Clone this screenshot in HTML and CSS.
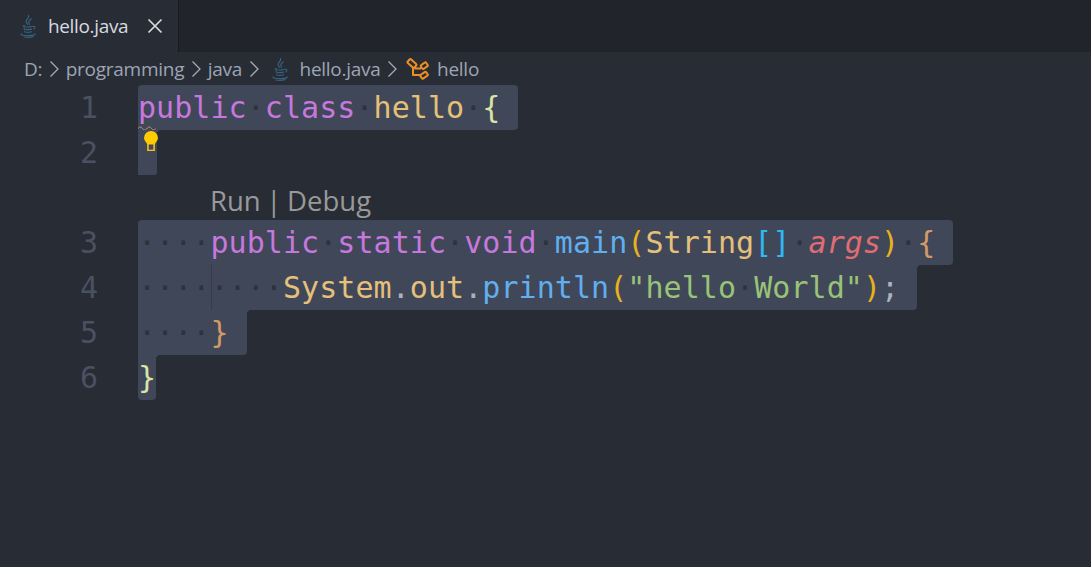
FILE: index.html
```html
<!DOCTYPE html>
<html lang="en">
<head>
<meta charset="utf-8">
<title>hello.java</title>
<link rel="stylesheet" href="styles.css">
</head>
<body>
<svg class="defs" width="0" height="0" aria-hidden="true">
  <symbol id="java" viewBox="0 0 24 24">
    <g fill="none" stroke="#36607f" stroke-width="1.200" stroke-linecap="round">
      <path d="M12.500 1.500c1.500 2.500-3.200 3.800-2.400 6.300.3 1 1.200 1.700 1.400 2.500"/>
      <path d="M15.200 5c-2 1.300-2.900 2-2.400 3.500.2.700.7 1.100.6 1.900"/>
      <path d="M8.300 11.500c-1.500.5-1.800 1 .5 1.300 2.200.3 5 .2 7-.3"/>
      <path d="M8.300 14.500c-.9.6.3 1 2.800 1.100 1.700 0 3.300-.1 4.400-.5"/>
      <path d="M9 17.300c-1 .6.6 1 3 1 1.500 0 2.700-.2 3.500-.6"/>
      <path d="M16.500 12.500c2.300-.8 3.300.8 1.500 2.300"/>
      <path d="M5.500 20c-1.800 1 3 1.700 7 1.700s7.500-.7 6.500-1.900"/>
      <path d="M8 23c3 .5 7 .3 9-.5"/>
    </g>
  </symbol>
  <symbol id="chev" viewBox="0 0 10 18">
    <path d="M1.500 1.500l7.500 7.500-7.500 7.500" fill="none" stroke="#a5abb5" stroke-width="1.300"/>
  </symbol>
</svg>

<div class="tabbar">
  <div class="tab">
    <svg class="ic-java"><use href="#java"/></svg>
    <span class="tab-name">hello.java</span>
    <svg class="ic-close" viewBox="0 0 16 16"><path d="M1.500 1.500l13 13M14.500 1.500l-13 13" fill="none" stroke="#d7dae0" stroke-width="1.700"/></svg>
  </div>
</div>

<nav class="crumbs">
  <span>D:</span>
  <svg class="chev"><use href="#chev"/></svg>
  <span>programming</span>
  <svg class="chev"><use href="#chev"/></svg>
  <span>java</span>
  <svg class="chev"><use href="#chev"/></svg>
  <svg class="ic-java"><use href="#java"/></svg>
  <span>hello.java</span>
  <svg class="chev"><use href="#chev"/></svg>
  <svg class="ic-class" viewBox="0 0 24 22"><g fill="none" stroke="#ee8f24" stroke-width="2" stroke-linejoin="round"><rect x="2.500" y="3" width="9" height="5" rx="1.500" transform="rotate(42 7 5.500)"/><rect x="16" y="5.500" width="6.500" height="4.500" rx="1.200" transform="rotate(-35 19.200 7.700)"/><rect x="15.500" y="15" width="7" height="4.500" rx="1.200" transform="rotate(-35 19 17.200)"/><path d="M9.500 10.500h6.500M8 10v7h7.500"/></g></svg>
  <span>hello</span>
</nav>

<main class="editor">
  <div class="line">
    <span class="num">1</span>
    <code class="sel s1"><i class="k">public</i><i class="ws">·</i><i class="k">class</i><i class="ws">·</i><i class="y">hello</i><i class="ws">·</i><i class="pale">{</i></code>
    <svg class="squiggle" viewBox="0 0 18 4"><path d="M0 2.500c1.500-2 3-2 4.500 0s3 2 4.500 0 3-2 4.500 0 3 2 4.500 0" fill="none" stroke="#c99a6c" stroke-width="1"/></svg>
    <svg class="bulb" viewBox="0 0 16 21"><path d="M8 1a7 7 0 0 0-7 7c0 2.700 2.300 3.800 3.300 6.500h7.400C12.700 11.800 15 10.700 15 8a7 7 0 0 0-7-7z" fill="#ffcc00"/><path d="M4.900 13.500v6.700h6.200v-6.700" fill="none" stroke="#f4c20d" stroke-width="1.600"/><rect x="6" y="15" width="4" height="4.400" fill="#4a4568"/></svg>
  </div>
  <div class="line">
    <span class="num">2</span>
    <code class="sel s2"></code>
  </div>
  <div class="lens">Run | Debug</div>
  <div class="line">
    <span class="num">3</span>
    <code class="sel s3"><i class="ws">····</i><i class="k">public</i><i class="ws">·</i><i class="k">static</i><i class="ws">·</i><i class="k">void</i><i class="ws">·</i><i class="b">main</i><i class="gold">(</i><i class="y">String</i><i class="cy">[]</i><i class="ws">·</i><i class="arg">args</i><i class="gold">)</i><i class="ws">·</i><i class="o">{</i></code>
  </div>
  <div class="line">
    <span class="num">4</span>
    <code class="sel s4"><i class="ws">········</i><i class="y">System</i><i class="pn">.</i><i class="y">out</i><i class="pn">.</i><i class="b">println</i><i class="gold">(</i><i class="g">"hello</i><i class="ws">·</i><i class="g">World"</i><i class="gold">)</i><i class="pn">;</i></code>
  </div>
  <div class="line">
    <span class="num">5</span>
    <code class="sel s5"><i class="ws">····</i><i class="o">}</i></code>
  </div>
  <div class="line">
    <span class="num">6</span>
    <code class="sel s6"><i class="pale">}</i></code>
  </div>
</main>
</body>
</html>
```
FILE: styles.css
```css
* { box-sizing: border-box; }
html, body { margin: 0; height: 100%; }
body {
  width: 1091px;
  height: 567px;
  overflow: hidden;
  background: #282c34;
  font-family: "Open Sans", "Noto Sans", sans-serif;
}
.defs { position: absolute; }

.tabbar { height: 52px; background: #21252b; display: flex; }
.tab {
  width: 179px;
  height: 52px;
  background: #282c34;
  border-right: 1px solid #181a1f;
  display: flex;
  align-items: center;
  padding-left: 16px;
  color: #d7dae0;
  font-size: 19px;
}
.tab .ic-java { width: 24px; height: 24px; margin-right: 8px; }
.tab-name { width: 80px; letter-spacing: -0.35px; white-space: nowrap; }
.ic-close { width: 16px; height: 16px; margin-left: 19px; }

.crumbs {
  height: 33px;
  display: flex;
  align-items: center;
  padding-left: 24px;
  color: #9da5b4;
  font-size: 19px;
  letter-spacing: -0.27px;
}
.chev { width: 10px; height: 18px; margin: 0 7px 0 6.5px; flex: none; }
.crumbs .ic-java { width: 24px; height: 24px; margin: 0 8px 0 2px; }
.ic-class { width: 24px; height: 22px; margin: 0 8px 0 1px; }

.editor { font-size: 30px; line-height: 45px; }
.line { height: 45px; display: flex; position: relative; }
.num {
  width: 98px;
  margin-right: 40px;
  text-align: right;
  color: #495162;
  font-family: "DejaVu Sans Mono", monospace;
  font-size: 30px;
  line-height: 46px;
}
.sel {
  display: block;
  height: 45px;
  background: #404758;
  padding-right: 18px;
  position: relative;
  white-space: pre;
  font-family: "DejaVu Sans Mono", monospace;
  letter-spacing: 0.06px;
  font-size: 30px;
}
.sel i { font-style: normal; }
.sel::after {
  content: "";
  position: absolute;
  left: 100%;
  top: 0;
  width: 4px;
  height: 4px;
  background: radial-gradient(circle at 100% 100%, transparent 4px, #404758 4px);
}
.s1 { border-radius: 4px 4px 4px 0; }
.s1::after, .s3::after { display: none; }
.s2 { width: 19px; padding: 0; border-radius: 0 0 3px 0; }
.s3 { border-radius: 4px 4px 4px 0; }
.s4 { border-radius: 0 0 4px 0; }
.s4::before {
  content: "";
  position: absolute;
  left: 73px;
  top: 0;
  width: 1px;
  height: 45px;
  background: #353b48;
}
.s5 { border-radius: 0 0 4px 0; }
.s6 { padding-right: 0; border-radius: 0 0 4px 4px; }

.k { color: #c678dd; }
.y { color: #e5c07b; }
.pale { color: #dbe3a5; }
.b { color: #61afef; }
.gold { color: #e9b21c; }
.cy { color: #2fb8f5; }
.sel .arg { color: #e06c75; font-style: italic; }
.o { color: #d19a66; }
.g { color: #98c379; }
.pn { color: #abb2bf; }
.ws { color: #2e323a; }

.lens {
  height: 45px;
  padding-left: 210px;
  color: #999;
  font-size: 27.500px;
  line-height: 52px;
  word-spacing: -1.500px;
}

.squiggle {
  position: absolute;
  left: 138px;
  top: 41px;
  width: 18px;
  height: 4px;
}
.bulb { position: absolute; left: 143px; top: 45px; width: 16px; height: 21px; z-index: 2; overflow: visible; }
```
